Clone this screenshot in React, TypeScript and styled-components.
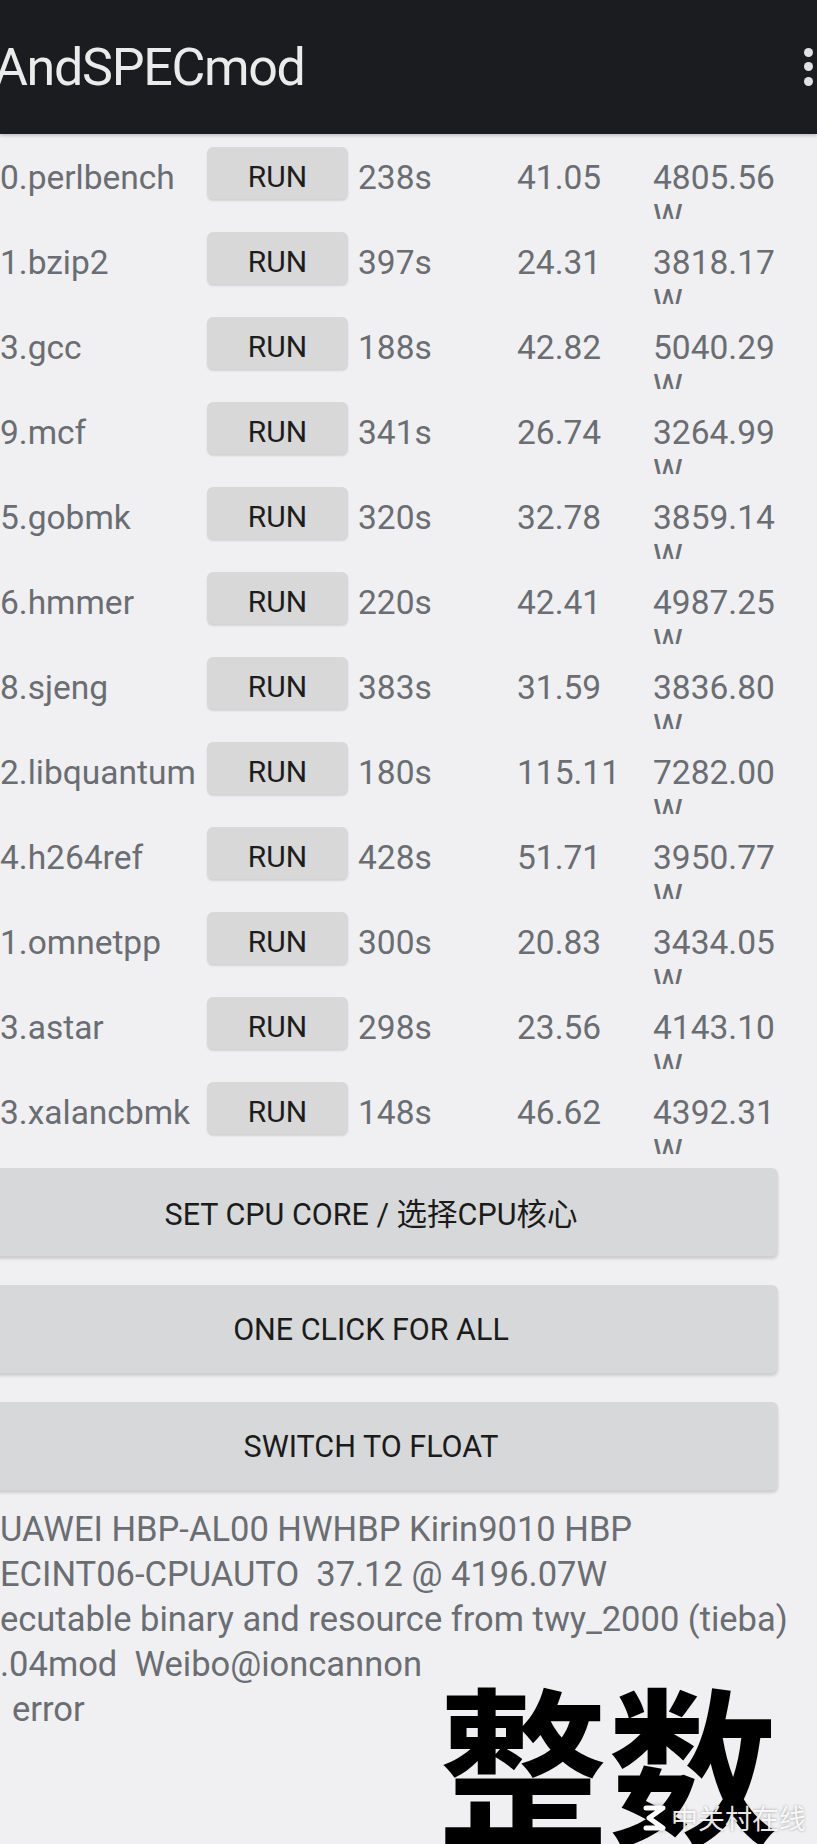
import * as React from 'react';
import styled, { createGlobalStyle } from 'styled-components';

// AndSPECmod result screen (cropped phone screenshot)

type Bench = { name: string; time: string; score: string; ratio: string };

const benches: Bench[] = [
  { name: '0.perlbench', time: '238s', score: '41.05', ratio: '4805.56' },
  { name: '1.bzip2', time: '397s', score: '24.31', ratio: '3818.17' },
  { name: '3.gcc', time: '188s', score: '42.82', ratio: '5040.29' },
  { name: '9.mcf', time: '341s', score: '26.74', ratio: '3264.99' },
  { name: '5.gobmk', time: '320s', score: '32.78', ratio: '3859.14' },
  { name: '6.hmmer', time: '220s', score: '42.41', ratio: '4987.25' },
  { name: '8.sjeng', time: '383s', score: '31.59', ratio: '3836.80' },
  { name: '2.libquantum', time: '180s', score: '115.11', ratio: '7282.00' },
  { name: '4.h264ref', time: '428s', score: '51.71', ratio: '3950.77' },
  { name: '1.omnetpp', time: '300s', score: '20.83', ratio: '3434.05' },
  { name: '3.astar', time: '298s', score: '23.56', ratio: '4143.10' },
  { name: '3.xalancbmk', time: '148s', score: '46.62', ratio: '4392.31' },
];

const infoLines = [
  'UAWEI HBP-AL00 HWHBP Kirin9010 HBP',
  'ECINT06-CPUAUTO\u00a0 37.12 @ 4196.07W',
  'ecutable binary and resource from twy_2000 (tieba)',
  '.04mod\u00a0 Weibo@ioncannon',
];

const App: React.FC = () => (
  <>
    <GlobalStyle />
    <Screen>
      <AppBar>
        <Title>AndSPECmod</Title>
        <MenuDots aria-label="more">
          <span /><span /><span />
        </MenuDots>
      </AppBar>

      <Table>
        {benches.map((b) => (
          <Row key={b.name}>
            <Cell>{b.name}</Cell>
            <RunButton>RUN</RunButton>
            <Cell $pad={10}>{b.time}</Cell>
            <Cell>{b.score}</Cell>
            <Cell>
              {b.ratio}
              <br />W
            </Cell>
          </Row>
        ))}
      </Table>

      <Actions>
        <WideButton>SET CPU CORE / 选择CPU核心</WideButton>
        <WideButton>ONE CLICK FOR ALL</WideButton>
        <WideButton>SWITCH TO FLOAT</WideButton>
      </Actions>

      <Info>
        {infoLines.map((l) => (
          <InfoLine key={l}>{l}</InfoLine>
        ))}
        <InfoLine $indent={12}>error</InfoLine>
      </Info>

      <Caption>整数</Caption>
      <Watermark>
        <svg width="24" height="26" viewBox="0 0 24 26">
          <path d="M3 3 H20 L6 13 L20 23 H3" fill="none" stroke="#fff" strokeWidth="5" strokeLinejoin="round" strokeLinecap="round" />
        </svg>
        中关村在线
      </Watermark>
    </Screen>
  </>
);

export default App;

/* ===== Styling ===== */

const GlobalStyle = createGlobalStyle`
  html, body { margin: 0; padding: 0; background: #f0f0f2; }
  body { width: 817px; overflow: hidden; }
`;

const Screen = styled.div`
  position: relative;
  width: 817px;
  height: 1844px;
  overflow: hidden;
  background: #f0f0f2;
  font-family: Roboto, "Noto Sans CJK SC", sans-serif;
`;

const AppBar = styled.header`
  height: 134px;
  background: #1a1c1f;
  display: flex;
  align-items: center;
  justify-content: space-between;
  box-shadow: 0 2px 3px rgba(0,0,0,.18);
`;

const Title = styled.h1`
  margin: 0 0 0 -6px;
  font-size: 52px;
  font-weight: 400;
  letter-spacing: -1.3px;
  color: #ebebeb;
`;

const MenuDots = styled.div`
  display: flex;
  flex-direction: column;
  gap: 5.5px;
  margin-right: 4px;
  margin-top: -1px;
  span {
    width: 9px; height: 9px;
    border-radius: 50%;
    background: #e2e2e2;
  }
`;

const Table = styled.div`
  display: flex;
  flex-direction: column;
`;

const Row = styled.div`
  height: 85px;
  display: grid;
  grid-template-columns: 207px 141px 169px 136px 1fr;
  align-items: start;
`;

const Cell = styled.div<{ $pad?: number }>`
  height: 61px;
  padding-top: 24px;
  padding-left: ${({ $pad }) => $pad ?? 0}px;
  overflow: hidden;
  font-size: 33.5px;
  line-height: 39px;
  color: #6a6d72;
  white-space: nowrap;
`;

const RunButton = styled.button`
  margin-top: 13px;
  height: 52px;
  border: 0;
  border-radius: 6px;
  background: #d8d8d9;
  box-shadow: 0 2px 2px rgba(0,0,0,.12);
  font-family: inherit;
  font-size: 30px;
  color: #1d1d1d;
  padding: 7px 0 0;
`;

const Actions = styled.div`
  margin-top: 14px;
  display: flex;
  flex-direction: column;
  gap: 29px;
`;

const WideButton = styled.button`
  margin-left: -36px;
  width: 814px;
  height: 88px;
  border: 0;
  border-radius: 6px;
  background: #d7d8d9;
  box-shadow: 0 3px 3px rgba(0,0,0,.14);
  font-family: inherit;
  font-size: 30.5px;
  color: #1b1b1b;
`;

const Info = styled.div`
  margin-top: 17px;
  display: flex;
  flex-direction: column;
`;

const InfoLine = styled.div<{ $indent?: number }>`
  padding-left: ${({ $indent }) => $indent ?? 0}px;
  font-size: 34.5px;
  line-height: 45px;
  color: #6a6d72;
  white-space: pre;
`;

const Caption = styled.div`
  position: absolute;
  left: 438px;
  top: 1674px;
  font-family: "Noto Sans CJK SC", sans-serif;
  font-weight: 700;
  font-size: 170px;
  letter-spacing: 0;
  line-height: 1;
  color: #000;
`;

const Watermark = styled.div`
  position: absolute;
  left: 643px;
  top: 1798px;
  display: flex;
  align-items: center;
  gap: 4px;
  font-family: "Noto Sans CJK SC", sans-serif;
  font-size: 27px;
  color: rgba(255,255,255,.92);
  text-shadow: 0 0 3px rgba(0,0,0,.35);
  svg { filter: drop-shadow(0 0 2px rgba(0,0,0,.3)); }
`;
